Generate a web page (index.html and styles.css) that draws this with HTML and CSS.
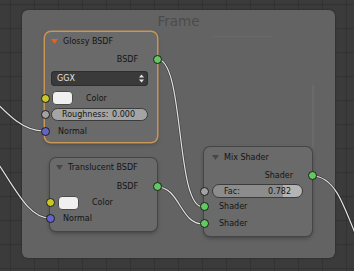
FILE: index.html
```html
<!DOCTYPE html>
<html lang="en">
<head>
  <meta charset="UTF-8" />
  <title>Node Editor - Frame</title>
  <link rel="stylesheet" href="styles.css">
</head>
<body>
  <div class="editor">
    <div class="frame">
      <div class="frame-title">Frame</div>
      <span class="ghost ghost-top"></span>
      <span class="ghost ghost-side"></span>
    </div>

    <svg class="wires" width="354" height="271" viewBox="0 0 354 271">
      <g class="wire-shadow">
        <path d="M-22 84 C 4 110, 20 131, 44 131" />
        <path d="M-14 146 C 14 184, 26 218, 50 218" />
        <path d="M157 59 C 185 59, 175 207, 203 207" />
        <path d="M157 187 C 180 187, 180 224, 203 224" />
        <path d="M312 176 C 336 176, 344 205, 366 262" />
      </g>
      <g class="wire">
        <path d="M-22 84 C 4 110, 20 131, 44 131" />
        <path d="M-14 146 C 14 184, 26 218, 50 218" />
        <path d="M157 59 C 185 59, 175 207, 203 207" />
        <path d="M157 187 C 180 187, 180 224, 203 224" />
        <path d="M312 176 C 336 176, 344 205, 366 262" />
      </g>
    </svg>

    <div class="node glossy selected">
      <div class="node-header">
        <svg class="collapse" width="7" height="5" viewBox="0 0 7 5"><path d="M0 0 H7 L3.5 5 Z" /></svg>
        <span>Glossy BSDF</span>
      </div>
      <div class="row out">BSDF<span class="socket shader"></span></div>
      <div class="select">
        <span>GGX</span>
        <svg width="5" height="9" viewBox="0 0 5 9"><path d="M0 3.5 L2.5 0.5 L5 3.5 Z M0 5.5 L2.5 8.5 L5 5.5 Z" /></svg>
      </div>
      <div class="row in color-row">
        <span class="socket color"></span>
        <span class="swatch"></span>
        <span class="color-label">Color</span>
      </div>
      <div class="row in slider-row">
        <span class="socket value"></span>
        <div class="slider"><span>Roughness:</span><span>0.000</span></div>
      </div>
      <div class="row in normal-row"><span class="socket vector"></span>Normal</div>
    </div>

    <div class="node translucent">
      <div class="node-header">
        <svg class="collapse" width="7" height="5" viewBox="0 0 7 5"><path d="M0 0 H7 L3.5 5 Z" /></svg>
        <span>Translucent BSDF</span>
      </div>
      <div class="row out">BSDF<span class="socket shader"></span></div>
      <div class="row in color-row">
        <span class="socket color"></span>
        <span class="swatch"></span>
        <span class="color-label">Color</span>
      </div>
      <div class="row in normal-row"><span class="socket vector"></span>Normal</div>
    </div>

    <div class="node mix">
      <div class="node-header">
        <svg class="collapse" width="7" height="5" viewBox="0 0 7 5"><path d="M0 0 H7 L3.5 5 Z" /></svg>
        <span>Mix Shader</span>
      </div>
      <div class="row out">Shader<span class="socket shader"></span></div>
      <div class="row in slider-row">
        <span class="socket value"></span>
        <div class="slider fac" style="--fill: 78.2%"><span>Fac:</span><span>0.782</span></div>
      </div>
      <div class="row in shader-row"><span class="socket shader"></span>Shader</div>
      <div class="row in shader-row"><span class="socket shader"></span>Shader</div>
    </div>
  </div>
</body>
</html>
```

FILE: styles.css
```css
body {
  margin: 0;
  background: #3b3b3b;
  font-family: "DejaVu Sans", sans-serif;
  font-size: 8px;
  color: #141414;
}
.editor {
  position: relative;
  width: 354px;
  height: 271px;
  overflow: hidden;
  background-color: #3b3b3b;
  background-image:
    linear-gradient(90deg, rgba(0, 0, 0, 0.14) 1px, transparent 1px),
    linear-gradient(rgba(0, 0, 0, 0.14) 1px, transparent 1px);
  background-size: 24px 24px;
  background-position: 10px 4px;
}
.frame {
  position: absolute;
  left: 22px;
  top: 10px;
  width: 313px;
  height: 248px;
  background: #636363;
  border-radius: 6px;
  box-shadow: 0 0 2px rgba(0, 0, 0, 0.5);
}
.frame-title {
  text-align: center;
  font-size: 13.5px;
  color: #4c4c4c;
  padding-top: 3px;
}
.ghost {
  position: absolute;
  background: rgba(255, 255, 255, 0.05);
}
.ghost-top {
  left: 191px;
  top: 26px;
  width: 60px;
  height: 1px;
}
.ghost-side {
  left: 290px;
  top: 75px;
  width: 2px;
  height: 62px;
}
.wires {
  position: absolute;
  left: 0;
  top: 0;
}
.wires path {
  fill: none;
}
.wire-shadow path {
  stroke: rgba(0, 0, 0, 0.35);
  stroke-width: 2.6;
}
.wire path {
  stroke: #e2e2e2;
  stroke-width: 1.2;
}
.node {
  position: absolute;
  box-sizing: border-box;
  background: #6a6a6a;
  border-radius: 6px;
  box-shadow: 0 0 0 1px #454545, 0 2px 4px rgba(0, 0, 0, 0.35);
  display: flex;
  flex-direction: column;
}
.node.selected {
  box-shadow: 0 0 0 1.5px #c99654, 0 2px 4px rgba(0, 0, 0, 0.35);
}
.glossy {
  left: 45px;
  top: 32px;
  width: 112px;
  height: 110px;
}
.translucent {
  left: 50px;
  top: 158px;
  width: 107px;
  height: 73px;
}
.mix {
  left: 204px;
  top: 147px;
  width: 108px;
  height: 89px;
}
.node-header {
  display: flex;
  align-items: center;
  gap: 5px;
  height: 18px;
  padding-left: 6px;
}
.collapse path {
  fill: #474747;
}
.glossy .collapse path {
  fill: #e0622c;
}
.translucent .node-header {
  height: 19px;
}
.mix .node-header {
  height: 20px;
  padding-left: 8px;
}
.row {
  position: relative;
  display: flex;
  align-items: center;
  height: 18px;
}
.row.out {
  justify-content: flex-end;
  padding-right: 19px;
}
.row.in {
  padding-left: 13px;
}
.mix .row.in {
  padding-left: 15px;
}
.socket {
  position: absolute;
  top: 50%;
  width: 9px;
  height: 9px;
  margin-top: -4.5px;
  box-sizing: border-box;
  border-radius: 50%;
  border: 1px solid #1c1c1c;
}
.out .socket {
  right: -4.5px;
}
.in .socket {
  left: -4.5px;
}
.socket.shader {
  background: #62c862;
}
.socket.color {
  background: #c8c82a;
}
.socket.vector {
  background: #6464c8;
}
.socket.value {
  background: #a2a2a2;
}
.select {
  display: flex;
  align-items: center;
  justify-content: space-between;
  height: 15px;
  margin: 3px 9px 0 6px;
  padding: 0 4px 0 6px;
  background: #3a3a3a;
  border-radius: 4px;
  box-shadow: inset 0 0 0 1px #2e2e2e;
  color: #e6e6e6;
}
.select path {
  fill: #e6e6e6;
}
.color-row {
  height: 20px;
  margin-top: 2px;
}
.row.in.color-row {
  padding-left: 7px;
}
.translucent .color-row {
  height: 15px;
  margin-top: 0;
}
.translucent .row.in.color-row {
  padding-left: 8px;
}
.swatch {
  width: 21px;
  height: 14px;
  box-sizing: border-box;
  background: #f0f0f0;
  border: 1px solid #4c4c4c;
  border-radius: 4px;
}
.color-label {
  margin-left: 13px;
}
.slider-row {
  height: 13px;
}
.row.in.slider-row {
  padding-left: 6px;
}
.mix .row.in.slider-row {
  padding-left: 8px;
  height: 14px;
}
.slider {
  flex: 1;
  display: flex;
  justify-content: space-between;
  align-items: center;
  box-sizing: border-box;
  height: 100%;
  margin-right: 9px;
  padding: 0 12px 0 10px;
  background: #a4a4a4;
  border: 1px solid #3c3c3c;
  border-radius: 7px;
}
.slider.fac {
  background: linear-gradient(90deg, #8c8c8c var(--fill), #b4b4b4 var(--fill));
  padding: 0 11px 0 11px;
}
.normal-row {
  margin-top: 1px;
}
.translucent .normal-row {
  height: 16px;
  margin-top: 0;
}
.glossy .row.out {
  height: 18px;
}
.translucent .row.out {
  height: 18px;
}
.mix .row.out {
  height: 17px;
}
.shader-row {
  height: 17px;
}
```
